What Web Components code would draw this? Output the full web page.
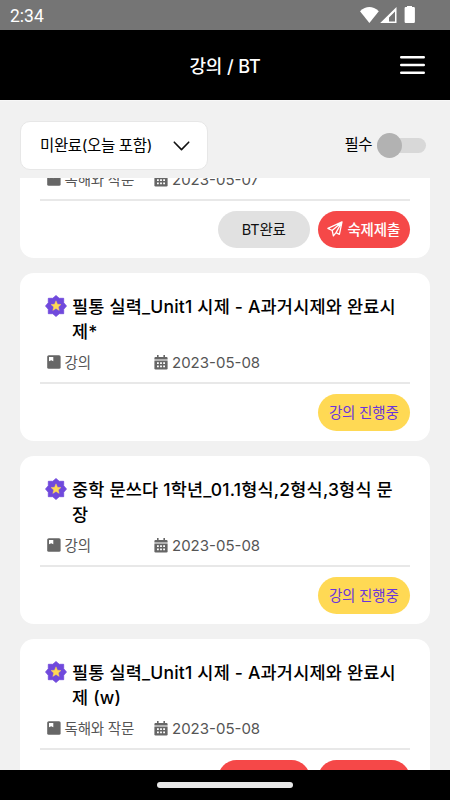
<!DOCTYPE html>
<html lang="ko">
<head>
<meta charset="utf-8">
<title>강의 / BT</title>
<style>
body{margin:0;width:450px;height:800px;overflow:hidden;background:#f1f1f1;color:#111;font-family:Inter,"Noto Sans CJK KR",sans-serif}
</style>
</head>
<body>
<app-screen></app-screen>
<script>
const define=(name,html,setup)=>customElements.define(name,class extends HTMLElement{
  constructor(){
    super();
    const t=document.createElement('template');
    t.innerHTML=html;
    this.attachShadow({mode:'open'}).append(t.content.cloneNode(true));
    if(setup)setup(this.shadowRoot,this);
  }
});

define('status-bar',`<style>
:host{display:flex;align-items:center;height:30px;background:#757575;color:#fff;font:17.5px/30px Roboto,sans-serif;padding:0 0 0 10px;box-sizing:border-box}
span{flex:1;padding-top:2px}svg{display:block;width:60px;height:30px;margin-right:32px}
</style><span>2:34</span>
<svg viewBox="0 0 60 30" fill="#fff"><path d="M2 11.2Q11.3 3 20.8 11.2L11.4 23Z"/><path fill-rule="evenodd" d="M38.5 7V23H22.2ZM37 11.5L31 17.500V21.500H37Z"/><path d="M49 7v-1h5v1h1.700q1.200 0 1.200 1.200v13.600q0 1.200-1.200 1.200h-7.900q-1.200 0-1.200-1.200V8.200Q46.600 7 47.800 7z"/></svg>`);

define('app-header',`<style>
:host{display:grid;grid-template-columns:1fr auto 1fr;align-items:center;height:70px;background:#000;color:#fff;padding:0 25px;box-sizing:border-box}
h1{grid-column:2;margin:3px 0 0;font-size:18px;font-weight:500;line-height:26px;letter-spacing:-.1px}
svg{justify-self:end;width:25px;height:20px}
</style><h1><slot></slot></h1><svg viewBox="0 0 25 20" stroke="#fff" stroke-width="2.4" stroke-linecap="round"><path d="M1.2 2.2h22.6M1.2 10h22.6M1.2 17.8h22.6"/></svg>`);

define('filter-select',`<style>
:host{display:flex;align-items:center;justify-content:space-between;width:188px;height:49px;background:#fff;border:1px solid #e7e7e7;border-radius:10px;padding:0 17px 0 19px;box-sizing:border-box;font-size:15.500px;line-height:26px;white-space:nowrap;color:#000}
span{letter-spacing:-.35px}svg{width:17px;height:10px}
</style><span><slot></slot></span><svg viewBox="0 0 17 10" fill="none" stroke="#111" stroke-width="1.6" stroke-linecap="round" stroke-linejoin="round"><path d="M1.3 1.2L8.5 8.6L15.7 1.2"/></svg>`);

define('toggle-switch',`<style>
:host{display:flex;align-items:center;gap:5px;font-size:15.5px;line-height:24px;color:#000;letter-spacing:-.5px}
i{display:flex;align-items:center;width:49px;height:15px;border-radius:8px;background:#d8d8d8}
b{width:25px;height:25px;border-radius:50%;background:#b2b2b2}
</style><span><slot></slot></span><i><b></b></i>`);

define('star-badge',`<style>:host{display:block;width:22px;height:22px}svg{display:block}</style>
<svg width="22" height="22" viewBox="-11 -11 22 22"><path fill="#7049dc" stroke="#7049dc" stroke-width=".8" stroke-linejoin="round" d="M0-10.500L3.200-7.700H7.700V-3.200L10.500 0L7.700 3.200V7.700H3.200L0 10.500L-3.200 7.700H-7.700V3.200L-10.500 0L-7.700-3.200V-7.700H-3.200Z"/><path fill="#ffd954" stroke="#ffd954" stroke-width=".4" d="M0-5.200L1.500-1.700L5-1.500L2.300.9L3.200 4.400L0 2.500L-3.200 4.400L-2.300.9L-5-1.500L-1.500-1.700Z"/></svg>`);

define('book-icon',`<style>:host{display:block;width:14px;height:14px;margin-top:-1px}svg{display:block}</style>
<svg width="14" height="14"><rect x=".2" y=".2" width="13.400" height="13.600" rx="1.600" fill="#666"/><path d="M2 2h4.300v4.300L4.200 5.300L2 6.300z" fill="#fff"/></svg>`);

define('calendar-icon',`<style>:host{display:block;width:14px;height:15px}svg{display:block}</style>
<svg width="14" height="15" fill="#666"><path d="M3 0h1.600v2H9.400V0H11v2h1.500Q13.600 2 13.600 3.200V4.600H.4V3.200Q.4 2 1.500 2H3z"/><path d="M.4 5.600H13.600V13.300Q13.600 14.500 12.400 14.500H1.600Q.4 14.500.4 13.300z"/><path fill="#fff" d="M3 7.200h1.800v1.800H3zM6.100 7.200h1.800v1.800H6.100zM9.200 7.200H11v1.800H9.200zM3 10.500h1.800v1.800H3zM6.100 10.500h1.800v1.800H6.100zM9.200 10.500H11v1.800H9.200z"/></svg>`);

define('pill-button',`<style>
:host{display:flex;align-items:center;justify-content:center;gap:4px;width:92.500px;height:37.500px;border-radius:19px;box-sizing:border-box;font-size:14.500px;line-height:22px;letter-spacing:-.2px;white-space:nowrap;background:#e1e1e1;color:#111}
span{margin-top:1px}
:host([kind=progress]){background:#ffd954;color:#6a35dd}
:host([kind=submit]){background:#f54848;color:#fff;font-weight:500}
svg{display:none;width:16px;height:16px}:host([kind=submit]) svg{display:block}
</style><svg viewBox="0 0 16 16" fill="none" stroke="#fff" stroke-width="1.300" stroke-linejoin="round"><path d="M15 .9L.9 7.300L5.200 9.500L6.400 14.900L9 11.600L12.400 13.300ZM5.200 9.500L15 .9L9 11.600"/></svg><span><slot></slot></span>`);

define('lesson-card',`<style>
:host{display:flex;flex-direction:column;flex:none;height:168px;background:#fff;border-radius:14px;padding:21px 20px 10px;box-sizing:border-box}
.title{display:flex;gap:5px;padding-left:5px;height:49px}
star-badge{margin-top:.5px}
h2{margin:1px 0 0;font-size:17.500px;line-height:24.500px;font-weight:500;letter-spacing:.2px;color:#000;white-space:nowrap}
.meta{display:grid;grid-template-columns:107.500px 1fr;padding-left:6.500px;height:39px;align-items:center;color:#555;font-size:14.500px;line-height:22px;border-bottom:2px solid #e8e8e8}
.meta>div{display:flex;align-items:center;gap:4px}
.s{letter-spacing:-.2px;margin-top:1px}.d{font-size:15px;margin-top:1px}
.actions{display:flex;justify-content:flex-end;gap:7.500px;margin-top:auto}
</style>
<div class="title"><star-badge></star-badge><h2><slot name="title"></slot></h2></div>
<div class="meta"><div><book-icon></book-icon><span class="s"></span></div><div><calendar-icon></calendar-icon><span class="d"></span></div></div>
<div class="actions"><slot></slot></div>`);

define('home-bar',`<style>
:host{display:flex;justify-content:center;align-items:center;height:30px;background:#000}
i{width:136px;height:5.500px;border-radius:3px;background:#e8e8e8}
</style><i></i>`);

// The first card is scrolled under the filters, so it has no visible title.
const cards=[
  ['','독해와 작문','2023-05-07',[['','BT완료'],['submit','숙제제출']]],
  ['필통 실력_Unit1 시제 - A과거시제와 완료시<br>제*','강의','2023-05-08',[['progress','강의 진행중']]],
  ['중학 문쓰다 1학년_01.1형식,2형식,3형식 문<br>장','강의','2023-05-08',[['progress','강의 진행중']]],
  ['필통 실력_Unit1 시제 - A과거시제와 완료시<br>제 (w)','독해와 작문','2023-05-08',[['submit',''],['submit','']]]
];
define('app-screen',`<style>
:host{display:flex;flex-direction:column;height:800px}
.filters{display:flex;flex:none;height:77.500px;justify-content:space-between;align-items:flex-start;padding:20px 24px 0 20px;box-sizing:border-box;border-top:1px solid #f7f7f7}
toggle-switch{height:48px}
main{flex:1;min-height:0;overflow:hidden;padding:0 20px;display:flex;flex-direction:column;justify-content:flex-start;gap:15px}
lesson-card:first-child{margin-top:-87.500px}
</style>
<status-bar></status-bar><app-header>강의 / BT</app-header>
<div class="filters"><filter-select>미완료(오늘 포함)</filter-select><toggle-switch>필수</toggle-switch></div>
<main></main><home-bar></home-bar>`,root=>{
  const main=root.querySelector('main');
  for(const [title,subject,date,buttons] of cards){
    const card=document.createElement('lesson-card');
    card.innerHTML=`<span slot="title">${title}</span>`+buttons.map(([k,t])=>`<pill-button kind="${k}">${t}</pill-button>`).join('');
    card.shadowRoot.querySelector('.s').textContent=subject;
    card.shadowRoot.querySelector('.d').textContent=date;
    main.append(card);
  }
});
</script>
</body>
</html>
